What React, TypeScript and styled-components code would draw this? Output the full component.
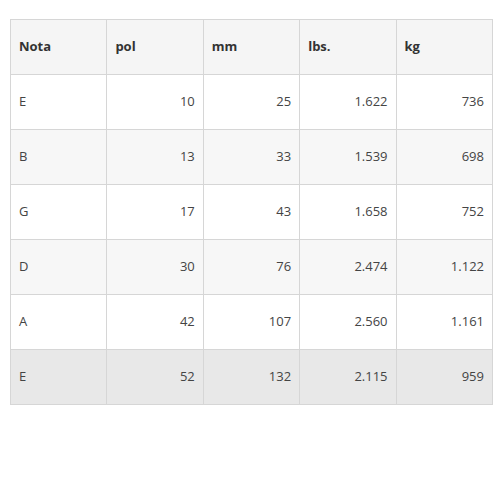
import React from "react";
import styled, { createGlobalStyle } from "styled-components";

const Global = createGlobalStyle`
  html, body { margin: 0; padding: 0; background: #fff; }
  body { font-family: "Open Sans", "Liberation Sans", sans-serif; }
`;

const Page = styled.div`
  padding: 19px 7px 0 10px;
`;

const Table = styled.table`
  width: 483px;
  border-collapse: collapse;
  table-layout: fixed;
  font-size: 13px;
  color: #444;
`;

const Th = styled.th`
  height: 55px;
  box-sizing: border-box;
  padding: 0 8px 2px;
  text-align: left;
  font-weight: 700;
  color: #333;
  background: #f5f5f5;
  border: 1px solid #d6d6d6;
`;

const Row = styled.tr<{ $bg: string }>`
  background: ${(p) => p.$bg};
`;

const Td = styled.td<{ $num?: boolean }>`
  height: 55px;
  box-sizing: border-box;
  padding: 0 8px 2px;
  text-align: ${(p) => (p.$num ? "right" : "left")};
  border: 1px solid #d6d6d6;
`;

const headers = ["Nota", "pol", "mm", "lbs.", "kg"];
const rows = [
  ["E", "10", "25", "1.622", "736"],
  ["B", "13", "33", "1.539", "698"],
  ["G", "17", "43", "1.658", "752"],
  ["D", "30", "76", "2.474", "1.122"],
  ["A", "42", "107", "2.560", "1.161"],
  ["E", "52", "132", "2.115", "959"],
];

export default function App() {
  return (
    <>
      <Global />
      <Page>
        <Table>
          <thead>
            <tr>
              {headers.map((h) => (
                <Th key={h}>{h}</Th>
              ))}
            </tr>
          </thead>
          <tbody>
            {rows.map((r, i) => (
              <Row
                key={i}
                $bg={i === rows.length - 1 ? "#e8e8e8" : i % 2 === 1 ? "#f7f7f7" : "#ffffff"}
              >
                {r.map((c, j) => (
                  <Td key={j} $num={j > 0}>
                    {c}
                  </Td>
                ))}
              </Row>
            ))}
          </tbody>
        </Table>
      </Page>
    </>
  );
}
